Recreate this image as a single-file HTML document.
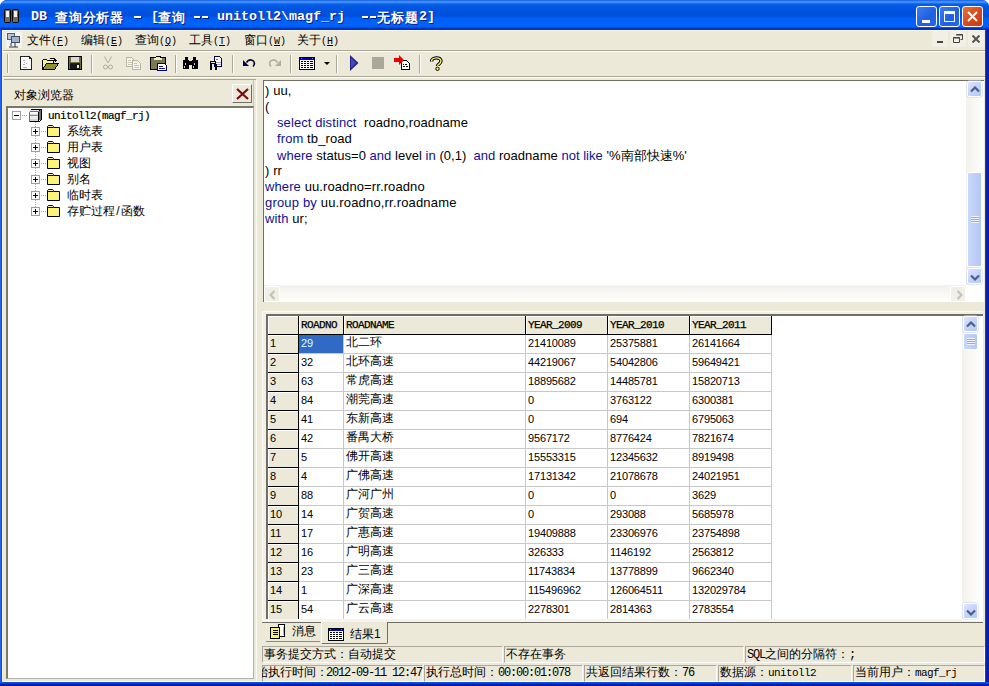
<!DOCTYPE html>
<html><head><meta charset="utf-8">
<style>
*{box-sizing:border-box;margin:0;padding:0}
html,body{width:989px;height:686px;overflow:hidden;background:#fff}
body{position:relative;font-family:"Liberation Sans",sans-serif;font-size:12px;color:#000}
.a{position:absolute}
.mono{font-family:"Liberation Mono",monospace}
#win{left:0;top:0;width:989px;height:686px;background:#0831d9;border-radius:7px 7px 0 0;overflow:hidden}
#title{left:0;top:0;width:989px;height:30px;background:linear-gradient(180deg,#0a4fd0 0px,#3a8cff 1px,#3a8cff 2.5px,#0860e6 4px,#0055e2 7px,#0050dc 16px,#005ef6 18px,#0064fc 26px,#0052e4 27.5px,#0032c4 28.5px,#0030c0 30px)}
#face{left:2px;top:30px;width:983px;height:652px;background:#ece9d8;border-left:1px solid #f4f2ea;border-bottom:1px solid #fbfaf4}
.tb{top:6px;width:21px;height:21px;border:1px solid #fff;border-radius:3px;background:linear-gradient(135deg,#3b7cf5,#1f5fe0 60%,#2a66e8)}
.ttl{left:31px;top:9px;color:#fff;font-family:"Liberation Mono",monospace;font-weight:bold;font-size:13.33px;white-space:pre;text-shadow:1px 1px 0 #0a1e8a}
.menu{top:32px;font-size:12px;white-space:pre}
.sep{top:55px;width:2px;height:18px;border-left:1px solid #aca899;border-right:1px solid #fff}
.ed{font-size:13px;white-space:pre;left:265px;letter-spacing:0.1px}
.kw{color:#101095}
.hc{background:#ece9d8;border-right:1px solid #000;border-bottom:1px solid #000;box-shadow:inset 1px 1px 0 #fff}
.gc{background:#fff;border-right:1px solid #c8c8c8;border-bottom:1px solid #c8c8c8}
.sel{background:#316ac5}
.htx{font-family:"Liberation Mono",monospace;font-size:11px;letter-spacing:-0.6px;white-space:pre;-webkit-text-stroke:0.25px #000}
.gt{font-size:11px;white-space:pre;line-height:13px;letter-spacing:-0.15px}
.cj{font-size:12px;letter-spacing:0}
.selt{color:#dff}
.tree{font-size:12px;white-space:pre;line-height:16px}
.tree.mono{font-size:11px;letter-spacing:-0.6px;-webkit-text-stroke:0.2px #000}
.trk{background:linear-gradient(90deg,#f3f1ec,#fefefb)}
.trkh{background:linear-gradient(180deg,#f3f1ec,#fefefb)}
.sbtn{border:1px solid #fff;border-radius:2px;background:linear-gradient(135deg,#dce6fe,#c4d4fb 50%,#b6c9f6);box-shadow:0 0 0 0.5px #c8d4ee}
.sthumb{border:1px solid #fff;border-radius:2px;background:linear-gradient(90deg,#c8d7fb,#bccdf9 60%,#b4c8f5)}
.grip{width:8px;height:7px;background:repeating-linear-gradient(180deg,#eef3fe 0 1px,#8cacf0 1px 2px)}
.sbtnd{border:1px solid #fff;border-radius:2px;background:#f0efe8}
.tab{font-size:12px;white-space:pre;line-height:14px}
.stp{border:1px solid;border-color:#aca899 #fff #fff #aca899}
.stx{font-size:12px;white-space:pre;line-height:15px}
.m{font-family:"Liberation Mono",monospace;font-size:12px;letter-spacing:-1.2px}
.tc{letter-spacing:0.8px}
.mm{font-family:"Liberation Mono",monospace;font-size:10px;letter-spacing:0}
.mdi{background:#f1efe6;border-radius:2px}
.ml{font-size:11px;letter-spacing:-0.6px}

</style></head><body>
<div id="win" class="a"></div>
<div id="title" class="a" style="border-radius:7px 7px 0 0"></div>
<div class="a" style="left:0;top:30px;width:1px;height:656px;background:#1f63f5"></div>
<div class="a" style="left:1px;top:30px;width:1px;height:656px;background:#164fcf"></div>
<div class="a" style="left:985px;top:30px;width:1px;height:656px;background:#1a3ad0"></div>
<div class="a" style="left:986px;top:30px;width:3px;height:656px;background:#0a1fa8"></div>
<div class="a" style="left:0;top:682px;width:989px;height:4px;background:linear-gradient(180deg,#0c55e8 0 1px,#0838d8 1px 2px,#0424b0 2px 3px,#001c98 3px)"></div>
<div id="face" class="a"></div>
<div class="a" style="left:3px;top:30px;width:982px;height:1px;background:#f8f8f4"></div>

<!-- title icon -->
<svg class="a" style="left:4px;top:9px" width="16" height="14" viewBox="0 0 16 14">
<rect x="0.5" y="0.5" width="6" height="13" rx="1" fill="#6a6a60" stroke="#000"/>
<rect x="8.5" y="0.5" width="6" height="13" rx="1" fill="#6a6a60" stroke="#000"/>
<rect x="2" y="2" width="3" height="6" fill="#f0f0f0"/><rect x="10" y="2" width="3" height="6" fill="#f0f0f0"/>
</svg>
<div class="a ttl" style="left:31px">DB</div>
<div class="a ttl tc" style="left:55px">查询分析器</div>
<div class="a" style="left:134px;top:16px;width:7px;height:2px;background:#fff;box-shadow:1px 1px 0 #0a1e8a"></div>
<div class="a ttl" style="left:151px">[</div>
<div class="a ttl tc" style="left:158px">查询</div>
<div class="a" style="left:194px;top:16px;width:6px;height:2px;background:#fff;box-shadow:1px 1px 0 #0a1e8a"></div><div class="a" style="left:202px;top:16px;width:6px;height:2px;background:#fff;box-shadow:1px 1px 0 #0a1e8a"></div>
<div class="a ttl" style="left:217px">unitoll2\magf_rj</div>
<div class="a" style="left:362px;top:16px;width:6px;height:2px;background:#fff;box-shadow:1px 1px 0 #0a1e8a"></div><div class="a" style="left:370px;top:16px;width:6px;height:2px;background:#fff;box-shadow:1px 1px 0 #0a1e8a"></div>
<div class="a ttl tc" style="left:377px">无标题</div>
<div class="a ttl" style="left:419px">2]</div>

<!-- title buttons -->
<div class="a tb" style="left:916px"><div class="a" style="left:5px;top:13px;width:8px;height:3px;background:#fff"></div></div>
<div class="a tb" style="left:939px"><div class="a" style="left:4px;top:4px;width:11px;height:11px;border:1px solid #fff;border-top-width:3px"></div></div>
<div class="a tb" style="left:962px;background:linear-gradient(135deg,#e6703e,#d4451c 60%,#c83a16)">
<svg class="a" style="left:4px;top:4px" width="11" height="11"><path d="M1 1L10 10M10 1L1 10" stroke="#fff" stroke-width="2"/></svg></div>

<!-- menu bar -->
<svg class="a" style="left:6px;top:32px" width="16" height="16" viewBox="0 0 16 16">
<rect x="0" y="0" width="16" height="16" fill="#f4f4f4"/>
<rect x="1.5" y="1.5" width="7" height="6" fill="#b6c3d6" stroke="#506070"/>
<rect x="5.5" y="4.5" width="8" height="6" fill="#9fb4cc" stroke="#405060"/>
<path d="M5 11v3M9 11v4M3 15h9" stroke="#333" stroke-width="1"/>
</svg>
<div class="a menu" style="left:27px">文件<span class="mm">(<u>F</u>)</span></div>
<div class="a menu" style="left:81px">编辑<span class="mm">(<u>E</u>)</span></div>
<div class="a menu" style="left:135px">查询<span class="mm">(<u>Q</u>)</span></div>
<div class="a menu" style="left:189px">工具<span class="mm">(<u>T</u>)</span></div>
<div class="a menu" style="left:244px">窗口<span class="mm">(<u>W</u>)</span></div>
<div class="a menu" style="left:297px">关于<span class="mm">(<u>H</u>)</span></div>
<!-- mdi buttons -->
<div class="a mdi" style="left:932px;top:31px;width:16px;height:16px"><div class="a" style="left:5px;top:10px;width:6px;height:2px;background:#444"></div></div>
<div class="a mdi" style="left:950px;top:31px;width:16px;height:16px">
<svg class="a" style="left:3px;top:3px" width="10" height="9"><path d="M3.5 0.5h6v5h-2M0.5 3.5h6v5h-6z" fill="none" stroke="#444"/><path d="M3 1h7M0 4h7" stroke="#444"/></svg></div>
<div class="a mdi" style="left:968px;top:31px;width:16px;height:16px">
<svg class="a" style="left:4px;top:4px" width="8" height="8"><path d="M0.5 0.5L7.5 7.5M7.5 0.5L0.5 7.5" stroke="#555" stroke-width="2"/></svg></div>
<div class="a" style="left:3px;top:50px;width:982px;height:1px;background:#aca899"></div>
<div class="a" style="left:3px;top:51px;width:982px;height:1px;background:#fff"></div>

<!-- toolbar -->
<div class="a" style="left:7px;top:54px;width:2px;height:19px;border-left:1px solid #aca899;border-right:1px solid #fff"></div>
<div class="a" style="left:3px;top:76px;width:982px;height:1px;background:#aca899"></div>
<div class="a" style="left:3px;top:77px;width:982px;height:1px;background:#fff"></div>
<div class="a sep" style="left:91px"></div>
<div class="a sep" style="left:175px"></div>
<div class="a sep" style="left:232px"></div>
<div class="a sep" style="left:290px"></div>
<div class="a sep" style="left:336px"></div>
<div class="a sep" style="left:419px"></div>


<svg class="a" style="left:0;top:50px" width="460" height="26" viewBox="0 50 460 26" shape-rendering="crispEdges">
<!-- new -->
<path d="M20.5 56.5H29.5L31.5 58.5V69.5H20.5Z" fill="#fff" stroke="#222"/>
<path d="M28 57H30V59H28Z" fill="#fff"/><path d="M29.5 56.5V58.5H31.5" fill="none" stroke="#222"/>
<path d="M23 60h2M24 62h1M23 64h2M26 63h1M23 67h4" stroke="#aaa"/>
<!-- open -->
<path d="M50 58.5h4l1 1v1" fill="none" stroke="#000"/><path d="M54 60h3l-1.5 2z" fill="#000"/>
<path d="M42.5 69.5V60.5L43.5 59.5H46.5L47.5 60.5H53.5V63.5" fill="#f8f88c" stroke="#000"/>
<path d="M42.5 69.5L46.5 63.5H58.5L54.5 69.5Z" fill="#909030" stroke="#000"/>
<!-- save -->
<path d="M68.5 56.5H81.5V69.5H68.5Z" fill="#707038" stroke="#000"/>
<path d="M71 57H79V62H71Z" fill="#d8d8d8"/><path d="M70 63H80" stroke="#222"/>
<path d="M70 64H80V69H70Z" fill="#181818"/><path d="M77 65H79V68H77Z" fill="#e8e8e8"/>
<!-- cut disabled -->
<path d="M104.5 56.5L108 63M111.5 56.5L108 63" stroke="#b0ae9c" fill="none" shape-rendering="auto"/>
<circle cx="105.5" cy="67" r="2" fill="none" stroke="#b0ae9c" shape-rendering="auto"/><circle cx="110.5" cy="67" r="2" fill="none" stroke="#b0ae9c" shape-rendering="auto"/>
<!-- copy disabled -->
<path d="M126.5 57.5H131.5L133.5 59.5V66.5H126.5Z" fill="#f4f3ec" stroke="#b8b6a4"/>
<path d="M132.5 60.5H137.5L140.5 63.5V69.5H132.5Z" fill="#f4f3ec" stroke="#b8b6a4"/>
<path d="M128 60h3M128 62h4M128 64h4M134 63h3M134 65h5M134 67h5" stroke="#c8c6b4"/>
<!-- paste -->
<path d="M150.5 57.5H165.5V69.5H150.5Z" fill="#7a7a50" stroke="#000"/>
<path d="M154 58H162V60H154Z" fill="#f0eeb8"/><path d="M156 56H160V58H156Z" fill="#f0eeb8"/><path d="M155.5 56.5h5" stroke="#000"/>
<path d="M157.5 63.5H164.5L166.5 65.5V70.5H157.5Z" fill="#fff" stroke="#000060"/>
<path d="M159 66h4M159 68h6" stroke="#1818a0"/>
<!-- binoculars -->
<path d="M185 57h3v3h-3zM193 57h3v3h-3z" fill="#000"/>
<path d="M183 60h6v9h-6zM192 60h6v9h-6zM188 61h5v4h-5z" fill="#000"/>
<path d="M185 63h1v2h-1zM194 63h1v2h-1zM184 66h1v2h-1zM193 66h1v2h-1z" fill="#ccc"/>
<!-- other -->
<path d="M214.5 56.5H219.5L221.5 58.5V66.5H214.5Z" fill="#fff" stroke="#000050"/>
<path d="M216 59h2" stroke="#6060c0"/><path d="M215 62h6M215 64h6" stroke="#a0a0d0"/>
<path d="M210 61h6v3h-6zM210 64h2v6h-2zM215 64h2v6h-2z" fill="#000"/><path d="M211 62h4v1h-4z" fill="#e8e8c8"/>
<!-- undo -->
<path d="M246.5 62.5C248 60 250 59.5 252 60.2C255 61.3 255 64.5 253 66.5" fill="none" stroke="#000030" stroke-width="1.6" shape-rendering="auto"/>
<path d="M243 60L243 66L249 66Z" fill="#000050" shape-rendering="auto"/>
<!-- redo disabled -->
<path d="M277.5 62.5C276 60 274 59.5 272 60.2C269 61.3 269 64.5 271 66.5" fill="none" stroke="#b0ae9c" stroke-width="1.6" shape-rendering="auto"/>
<path d="M281 60L281 66L275 66Z" fill="#b0ae9c" shape-rendering="auto"/>

<!-- tbgrid -->
<path d="M299.5 57.5H314.5V69.5H299.5Z" fill="#fff" stroke="#000"/>
<path d="M300 58H314V60H300Z" fill="#0000c8"/><path d="M301 58.5h1M312 58.5h1" stroke="#8080ff"/>
<path d="M301 61.5h2M304 61.5h2M307 61.5h2M310 61.5h3M301 63.5h2M304 63.5h2M307 63.5h2M310 63.5h3M301 65.5h2M304 65.5h2M307 65.5h2M310 65.5h3M301 67.5h2M304 67.5h2M307 67.5h2M310 67.5h3" stroke="#000"/>
<path d="M324 62h6l-3 3z" fill="#000" shape-rendering="auto"/>
<!-- run -->
<path d="M350 55L358.5 63L350 71Z" fill="#242490" shape-rendering="auto"/>
<path d="M351 58L356 63L351 68Z" fill="#4848b8" shape-rendering="auto"/>
<!-- stop -->
<path d="M372 57H384V69H372Z" fill="#a9a799"/>
<!-- red arrow doc -->
<path d="M401.5 60.5H406.5L409.5 63.5V69.5H401.5Z" fill="#fff" stroke="#000"/>
<path d="M403 64.5h1M405 64.5h2M403 66.5h2M406 66.5h2" stroke="#000"/>
<path d="M394 58H399V55L404 60L399 65V62H394Z" fill="#ee0000" shape-rendering="auto"/>
<!-- help -->
<path d="M431.5 61.5C431.5 57 441 56.5 441 61C441 64 437.5 64 437.5 66" fill="none" stroke="#000" stroke-width="3.4" shape-rendering="auto"/>
<path d="M431.5 61.5C431.5 57 441 56.5 441 61C441 64 437.5 64 437.5 66" fill="none" stroke="#f8f070" stroke-width="1.4" shape-rendering="auto"/>
<circle cx="437.5" cy="68.8" r="1.7" fill="#f8f070" stroke="#000" stroke-width="1" shape-rendering="auto"/>
</svg>

<!-- left panel -->
<div class="a" style="left:4px;top:79px;width:252px;height:1px;background:#aca899"></div>
<div class="a" style="left:253px;top:80px;width:1px;height:26px;background:#c8c5b5"></div>
<div class="a" style="left:14px;top:87px;font-size:12px">对象浏览器</div>
<div class="a" style="left:232px;top:84px;width:20px;height:19px;background:#ece9d8;border:1px solid;border-color:#fff #716f64 #716f64 #fff">
<svg class="a" style="left:3px;top:3px" width="13" height="12"><path d="M1 1L12 11M12 1L1 11" stroke="#7a0a0a" stroke-width="2.2"/></svg></div>
<div class="a" style="left:6px;top:106px;width:248px;height:573px;background:#fff;border:2px solid #7a7a68;border-right:1px solid #b4b2a4;border-bottom:1px solid #b4b2a4"></div>


<!-- tree -->
<div class="a" style="left:12px;top:111px;width:9px;height:9px;border:1px solid #a0a0a0;background:#fff"></div>
<div class="a" style="left:14px;top:115px;width:5px;height:1px;background:#000"></div>
<div class="a" style="left:22px;top:115px;width:6px;height:1px;background:repeating-linear-gradient(90deg,#a0a0a0 0 1px,transparent 1px 2px)"></div>
<div class="a" style="left:35px;top:122px;width:1px;height:89px;background:repeating-linear-gradient(180deg,#a0a0a0 0 1px,transparent 1px 2px)"></div>
<svg class="a" style="left:29px;top:109px" width="13" height="13" viewBox="0 0 13 13" shape-rendering="crispEdges">
<path d="M0 2H10V13H0Z" fill="#d4d4d4"/>
<path d="M1 0H12V2H1Z" fill="#e8e8e8"/>
<path d="M10 1H12V11H10Z" fill="#707070"/>
<path d="M1 3H9V5H1Z" fill="#f8f8f8"/><path d="M0 6H10V7H0Z" fill="#909090"/><path d="M1 7H9V10H1Z" fill="#ececec"/>
<path d="M0.5 2.5V12.5H9.5V2.5H0.5" fill="none" stroke="#707070"/>
<path d="M2 0.5H12.5V10.5L10.5 12.5H0.5" fill="none" stroke="#000"/>
<path d="M9.5 2.5L11.5 0.5M9.5 2.5V12.5" fill="none" stroke="#000"/>
</svg>
<div class="a tree mono" style="left:48px;top:108px">unitoll2(magf_rj)</div>
<div class="a" style="left:31px;top:127px;width:9px;height:9px;border:1px solid #a0a0a0;background:#fff"></div>
<div class="a" style="left:33px;top:131px;width:5px;height:1px;background:#000"></div><div class="a" style="left:35px;top:129px;width:1px;height:5px;background:#000"></div>
<div class="a" style="left:41px;top:131px;width:5px;height:1px;background:repeating-linear-gradient(90deg,#a0a0a0 0 1px,transparent 1px 2px)"></div>
<svg class="a" style="left:47px;top:125px" width="13" height="12" viewBox="0 0 13 12"><path d="M0.5 11.5V1.5L1.5 0.5H5.5L6.5 1.5V2.5H12.5V11.5Z" fill="#fcf47a" stroke="#000"/><path d="M1 2.5H6" stroke="#000"/></svg>
<div class="a tree" style="left:67px;top:123px">系统表</div>
<div class="a" style="left:31px;top:143px;width:9px;height:9px;border:1px solid #a0a0a0;background:#fff"></div>
<div class="a" style="left:33px;top:147px;width:5px;height:1px;background:#000"></div><div class="a" style="left:35px;top:145px;width:1px;height:5px;background:#000"></div>
<div class="a" style="left:41px;top:147px;width:5px;height:1px;background:repeating-linear-gradient(90deg,#a0a0a0 0 1px,transparent 1px 2px)"></div>
<svg class="a" style="left:47px;top:141px" width="13" height="12" viewBox="0 0 13 12"><path d="M0.5 11.5V1.5L1.5 0.5H5.5L6.5 1.5V2.5H12.5V11.5Z" fill="#fcf47a" stroke="#000"/><path d="M1 2.5H6" stroke="#000"/></svg>
<div class="a tree" style="left:67px;top:139px">用户表</div>
<div class="a" style="left:31px;top:159px;width:9px;height:9px;border:1px solid #a0a0a0;background:#fff"></div>
<div class="a" style="left:33px;top:163px;width:5px;height:1px;background:#000"></div><div class="a" style="left:35px;top:161px;width:1px;height:5px;background:#000"></div>
<div class="a" style="left:41px;top:163px;width:5px;height:1px;background:repeating-linear-gradient(90deg,#a0a0a0 0 1px,transparent 1px 2px)"></div>
<svg class="a" style="left:47px;top:157px" width="13" height="12" viewBox="0 0 13 12"><path d="M0.5 11.5V1.5L1.5 0.5H5.5L6.5 1.5V2.5H12.5V11.5Z" fill="#fcf47a" stroke="#000"/><path d="M1 2.5H6" stroke="#000"/></svg>
<div class="a tree" style="left:67px;top:155px">视图</div>
<div class="a" style="left:31px;top:175px;width:9px;height:9px;border:1px solid #a0a0a0;background:#fff"></div>
<div class="a" style="left:33px;top:179px;width:5px;height:1px;background:#000"></div><div class="a" style="left:35px;top:177px;width:1px;height:5px;background:#000"></div>
<div class="a" style="left:41px;top:179px;width:5px;height:1px;background:repeating-linear-gradient(90deg,#a0a0a0 0 1px,transparent 1px 2px)"></div>
<svg class="a" style="left:47px;top:173px" width="13" height="12" viewBox="0 0 13 12"><path d="M0.5 11.5V1.5L1.5 0.5H5.5L6.5 1.5V2.5H12.5V11.5Z" fill="#fcf47a" stroke="#000"/><path d="M1 2.5H6" stroke="#000"/></svg>
<div class="a tree" style="left:67px;top:171px">别名</div>
<div class="a" style="left:31px;top:191px;width:9px;height:9px;border:1px solid #a0a0a0;background:#fff"></div>
<div class="a" style="left:33px;top:195px;width:5px;height:1px;background:#000"></div><div class="a" style="left:35px;top:193px;width:1px;height:5px;background:#000"></div>
<div class="a" style="left:41px;top:195px;width:5px;height:1px;background:repeating-linear-gradient(90deg,#a0a0a0 0 1px,transparent 1px 2px)"></div>
<svg class="a" style="left:47px;top:189px" width="13" height="12" viewBox="0 0 13 12"><path d="M0.5 11.5V1.5L1.5 0.5H5.5L6.5 1.5V2.5H12.5V11.5Z" fill="#fcf47a" stroke="#000"/><path d="M1 2.5H6" stroke="#000"/></svg>
<div class="a tree" style="left:67px;top:187px">临时表</div>
<div class="a" style="left:31px;top:207px;width:9px;height:9px;border:1px solid #a0a0a0;background:#fff"></div>
<div class="a" style="left:33px;top:211px;width:5px;height:1px;background:#000"></div><div class="a" style="left:35px;top:209px;width:1px;height:5px;background:#000"></div>
<div class="a" style="left:41px;top:211px;width:5px;height:1px;background:repeating-linear-gradient(90deg,#a0a0a0 0 1px,transparent 1px 2px)"></div>
<svg class="a" style="left:47px;top:205px" width="13" height="12" viewBox="0 0 13 12"><path d="M0.5 11.5V1.5L1.5 0.5H5.5L6.5 1.5V2.5H12.5V11.5Z" fill="#fcf47a" stroke="#000"/><path d="M1 2.5H6" stroke="#000"/></svg>
<div class="a tree" style="left:67px;top:203px">存贮过程<span style="display:inline-block;width:6px;text-align:center">/</span>函数</div>

<div class="a" style="left:256px;top:80px;width:1px;height:601px;background:#faf9f2"></div>
<!-- editor -->
<div class="a" style="left:263px;top:80px;width:721px;height:222px;background:#fff;border-left:1px solid #716f64;border-top:1px solid #716f64"></div>
<div class="a ed" style="top:83px">) uu,</div>
<div class="a ed" style="top:99px">(</div>
<div class="a ed" style="top:115px;left:277px"><span class="kw">select distinct</span>  roadno,roadname</div>
<div class="a ed" style="top:131px;left:277px"><span class="kw">from</span> tb_road</div>
<div class="a ed" style="top:147px;left:277px;letter-spacing:0.03px"><span class="kw">where</span> status=0 <span class="kw">and</span> level <span class="kw">in</span> (0,1)  <span class="kw">and</span> roadname <span class="kw">not like</span> '%南部快速%'</div>
<div class="a ed" style="top:163px">) rr</div>
<div class="a ed" style="top:179px"><span class="kw">where</span> uu.roadno=rr.roadno</div>
<div class="a ed" style="top:195px;letter-spacing:0.17px"><span class="kw">group by</span> uu.roadno,rr.roadname</div>
<div class="a ed" style="top:211px"><span class="kw">with</span> ur;</div>


<!-- editor scrollbars -->
<div class="a trk" style="left:966px;top:81px;width:17px;height:204px"></div>
<div class="a sbtn" style="left:967px;top:81px;width:15px;height:16px"><svg class="a" style="left:2px;top:4px" width="10" height="7"><path d="M1 5.5L5 1.5L9 5.5" fill="none" stroke="#4d6185" stroke-width="2.2"/></svg></div>
<div class="a sthumb" style="left:967px;top:172px;width:15px;height:95px"><div class="a grip" style="left:3px;top:43px"></div></div>
<div class="a sbtn" style="left:967px;top:268px;width:15px;height:16px"><svg class="a" style="left:2px;top:5px" width="10" height="7"><path d="M1 1.5L5 5.5L9 1.5" fill="none" stroke="#4d6185" stroke-width="2.2"/></svg></div>
<div class="a trkh" style="left:264px;top:285px;width:702px;height:17px"></div>
<div class="a sbtnd" style="left:264px;top:286px;width:16px;height:16px"><svg class="a" style="left:4px;top:3px" width="7" height="10"><path d="M5.5 1L1.5 5L5.5 9" fill="none" stroke="#c3c1b4" stroke-width="2"/></svg></div>
<div class="a sbtnd" style="left:950px;top:286px;width:16px;height:16px"><svg class="a" style="left:5px;top:3px" width="7" height="10"><path d="M1.5 1L5.5 5L1.5 9" fill="none" stroke="#c3c1b4" stroke-width="2"/></svg></div>

<!-- grid -->
<div class="a" style="left:262px;top:311px;width:721px;height:311px;background:#f2f0e6;border-left:1px solid #faf9f3;border-top:1px solid #faf9f3"></div>
<div class="a" style="left:266px;top:314px;width:717px;height:307px;background:#fff;border-left:2px solid #716f64;border-top:2px solid #716f64"></div>
<div class="a hc" style="left:268px;top:316px;width:31px;height:19px"></div>
<div class="a hc" style="left:299px;top:316px;width:45px;height:19px"></div>
<div class="a htx" style="left:301px;top:319px">ROADNO</div>
<div class="a hc" style="left:344px;top:316px;width:182px;height:19px"></div>
<div class="a htx" style="left:346px;top:319px">ROADNAME</div>
<div class="a hc" style="left:526px;top:316px;width:82px;height:19px"></div>
<div class="a htx" style="left:528px;top:319px">YEAR_2009</div>
<div class="a hc" style="left:608px;top:316px;width:82px;height:19px"></div>
<div class="a htx" style="left:610px;top:319px">YEAR_2010</div>
<div class="a hc" style="left:690px;top:316px;width:82px;height:19px"></div>
<div class="a htx" style="left:692px;top:319px">YEAR_2011</div>
<div class="a hc" style="left:268px;top:335px;width:31px;height:19px"></div>
<div class="a gt" style="left:270px;top:337px">1</div>
<div class="a gc sel" style="left:299px;top:335px;width:45px;height:19px"></div>
<div class="a gt selt" style="left:301px;top:337px">29</div>
<div class="a gc" style="left:344px;top:335px;width:182px;height:19px"></div>
<div class="a gt cj" style="left:346px;top:336px">北二环</div>
<div class="a gc" style="left:526px;top:335px;width:82px;height:19px"></div>
<div class="a gt" style="left:528px;top:337px">21410089</div>
<div class="a gc" style="left:608px;top:335px;width:82px;height:19px"></div>
<div class="a gt" style="left:610px;top:337px">25375881</div>
<div class="a gc" style="left:690px;top:335px;width:82px;height:19px"></div>
<div class="a gt" style="left:692px;top:337px">26141664</div>
<div class="a hc" style="left:268px;top:354px;width:31px;height:19px"></div>
<div class="a gt" style="left:270px;top:356px">2</div>
<div class="a gc" style="left:299px;top:354px;width:45px;height:19px"></div>
<div class="a gt" style="left:301px;top:356px">32</div>
<div class="a gc" style="left:344px;top:354px;width:182px;height:19px"></div>
<div class="a gt cj" style="left:346px;top:355px">北环高速</div>
<div class="a gc" style="left:526px;top:354px;width:82px;height:19px"></div>
<div class="a gt" style="left:528px;top:356px">44219067</div>
<div class="a gc" style="left:608px;top:354px;width:82px;height:19px"></div>
<div class="a gt" style="left:610px;top:356px">54042806</div>
<div class="a gc" style="left:690px;top:354px;width:82px;height:19px"></div>
<div class="a gt" style="left:692px;top:356px">59649421</div>
<div class="a hc" style="left:268px;top:373px;width:31px;height:19px"></div>
<div class="a gt" style="left:270px;top:375px">3</div>
<div class="a gc" style="left:299px;top:373px;width:45px;height:19px"></div>
<div class="a gt" style="left:301px;top:375px">63</div>
<div class="a gc" style="left:344px;top:373px;width:182px;height:19px"></div>
<div class="a gt cj" style="left:346px;top:374px">常虎高速</div>
<div class="a gc" style="left:526px;top:373px;width:82px;height:19px"></div>
<div class="a gt" style="left:528px;top:375px">18895682</div>
<div class="a gc" style="left:608px;top:373px;width:82px;height:19px"></div>
<div class="a gt" style="left:610px;top:375px">14485781</div>
<div class="a gc" style="left:690px;top:373px;width:82px;height:19px"></div>
<div class="a gt" style="left:692px;top:375px">15820713</div>
<div class="a hc" style="left:268px;top:392px;width:31px;height:19px"></div>
<div class="a gt" style="left:270px;top:394px">4</div>
<div class="a gc" style="left:299px;top:392px;width:45px;height:19px"></div>
<div class="a gt" style="left:301px;top:394px">84</div>
<div class="a gc" style="left:344px;top:392px;width:182px;height:19px"></div>
<div class="a gt cj" style="left:346px;top:393px">潮莞高速</div>
<div class="a gc" style="left:526px;top:392px;width:82px;height:19px"></div>
<div class="a gt" style="left:528px;top:394px">0</div>
<div class="a gc" style="left:608px;top:392px;width:82px;height:19px"></div>
<div class="a gt" style="left:610px;top:394px">3763122</div>
<div class="a gc" style="left:690px;top:392px;width:82px;height:19px"></div>
<div class="a gt" style="left:692px;top:394px">6300381</div>
<div class="a hc" style="left:268px;top:411px;width:31px;height:19px"></div>
<div class="a gt" style="left:270px;top:413px">5</div>
<div class="a gc" style="left:299px;top:411px;width:45px;height:19px"></div>
<div class="a gt" style="left:301px;top:413px">41</div>
<div class="a gc" style="left:344px;top:411px;width:182px;height:19px"></div>
<div class="a gt cj" style="left:346px;top:412px">东新高速</div>
<div class="a gc" style="left:526px;top:411px;width:82px;height:19px"></div>
<div class="a gt" style="left:528px;top:413px">0</div>
<div class="a gc" style="left:608px;top:411px;width:82px;height:19px"></div>
<div class="a gt" style="left:610px;top:413px">694</div>
<div class="a gc" style="left:690px;top:411px;width:82px;height:19px"></div>
<div class="a gt" style="left:692px;top:413px">6795063</div>
<div class="a hc" style="left:268px;top:430px;width:31px;height:19px"></div>
<div class="a gt" style="left:270px;top:432px">6</div>
<div class="a gc" style="left:299px;top:430px;width:45px;height:19px"></div>
<div class="a gt" style="left:301px;top:432px">42</div>
<div class="a gc" style="left:344px;top:430px;width:182px;height:19px"></div>
<div class="a gt cj" style="left:346px;top:431px">番禺大桥</div>
<div class="a gc" style="left:526px;top:430px;width:82px;height:19px"></div>
<div class="a gt" style="left:528px;top:432px">9567172</div>
<div class="a gc" style="left:608px;top:430px;width:82px;height:19px"></div>
<div class="a gt" style="left:610px;top:432px">8776424</div>
<div class="a gc" style="left:690px;top:430px;width:82px;height:19px"></div>
<div class="a gt" style="left:692px;top:432px">7821674</div>
<div class="a hc" style="left:268px;top:449px;width:31px;height:19px"></div>
<div class="a gt" style="left:270px;top:451px">7</div>
<div class="a gc" style="left:299px;top:449px;width:45px;height:19px"></div>
<div class="a gt" style="left:301px;top:451px">5</div>
<div class="a gc" style="left:344px;top:449px;width:182px;height:19px"></div>
<div class="a gt cj" style="left:346px;top:450px">佛开高速</div>
<div class="a gc" style="left:526px;top:449px;width:82px;height:19px"></div>
<div class="a gt" style="left:528px;top:451px">15553315</div>
<div class="a gc" style="left:608px;top:449px;width:82px;height:19px"></div>
<div class="a gt" style="left:610px;top:451px">12345632</div>
<div class="a gc" style="left:690px;top:449px;width:82px;height:19px"></div>
<div class="a gt" style="left:692px;top:451px">8919498</div>
<div class="a hc" style="left:268px;top:468px;width:31px;height:19px"></div>
<div class="a gt" style="left:270px;top:470px">8</div>
<div class="a gc" style="left:299px;top:468px;width:45px;height:19px"></div>
<div class="a gt" style="left:301px;top:470px">4</div>
<div class="a gc" style="left:344px;top:468px;width:182px;height:19px"></div>
<div class="a gt cj" style="left:346px;top:469px">广佛高速</div>
<div class="a gc" style="left:526px;top:468px;width:82px;height:19px"></div>
<div class="a gt" style="left:528px;top:470px">17131342</div>
<div class="a gc" style="left:608px;top:468px;width:82px;height:19px"></div>
<div class="a gt" style="left:610px;top:470px">21078678</div>
<div class="a gc" style="left:690px;top:468px;width:82px;height:19px"></div>
<div class="a gt" style="left:692px;top:470px">24021951</div>
<div class="a hc" style="left:268px;top:487px;width:31px;height:19px"></div>
<div class="a gt" style="left:270px;top:489px">9</div>
<div class="a gc" style="left:299px;top:487px;width:45px;height:19px"></div>
<div class="a gt" style="left:301px;top:489px">88</div>
<div class="a gc" style="left:344px;top:487px;width:182px;height:19px"></div>
<div class="a gt cj" style="left:346px;top:488px">广河广州</div>
<div class="a gc" style="left:526px;top:487px;width:82px;height:19px"></div>
<div class="a gt" style="left:528px;top:489px">0</div>
<div class="a gc" style="left:608px;top:487px;width:82px;height:19px"></div>
<div class="a gt" style="left:610px;top:489px">0</div>
<div class="a gc" style="left:690px;top:487px;width:82px;height:19px"></div>
<div class="a gt" style="left:692px;top:489px">3629</div>
<div class="a hc" style="left:268px;top:506px;width:31px;height:19px"></div>
<div class="a gt" style="left:270px;top:508px">10</div>
<div class="a gc" style="left:299px;top:506px;width:45px;height:19px"></div>
<div class="a gt" style="left:301px;top:508px">14</div>
<div class="a gc" style="left:344px;top:506px;width:182px;height:19px"></div>
<div class="a gt cj" style="left:346px;top:507px">广贺高速</div>
<div class="a gc" style="left:526px;top:506px;width:82px;height:19px"></div>
<div class="a gt" style="left:528px;top:508px">0</div>
<div class="a gc" style="left:608px;top:506px;width:82px;height:19px"></div>
<div class="a gt" style="left:610px;top:508px">293088</div>
<div class="a gc" style="left:690px;top:506px;width:82px;height:19px"></div>
<div class="a gt" style="left:692px;top:508px">5685978</div>
<div class="a hc" style="left:268px;top:525px;width:31px;height:19px"></div>
<div class="a gt" style="left:270px;top:527px">11</div>
<div class="a gc" style="left:299px;top:525px;width:45px;height:19px"></div>
<div class="a gt" style="left:301px;top:527px">17</div>
<div class="a gc" style="left:344px;top:525px;width:182px;height:19px"></div>
<div class="a gt cj" style="left:346px;top:526px">广惠高速</div>
<div class="a gc" style="left:526px;top:525px;width:82px;height:19px"></div>
<div class="a gt" style="left:528px;top:527px">19409888</div>
<div class="a gc" style="left:608px;top:525px;width:82px;height:19px"></div>
<div class="a gt" style="left:610px;top:527px">23306976</div>
<div class="a gc" style="left:690px;top:525px;width:82px;height:19px"></div>
<div class="a gt" style="left:692px;top:527px">23754898</div>
<div class="a hc" style="left:268px;top:544px;width:31px;height:19px"></div>
<div class="a gt" style="left:270px;top:546px">12</div>
<div class="a gc" style="left:299px;top:544px;width:45px;height:19px"></div>
<div class="a gt" style="left:301px;top:546px">16</div>
<div class="a gc" style="left:344px;top:544px;width:182px;height:19px"></div>
<div class="a gt cj" style="left:346px;top:545px">广明高速</div>
<div class="a gc" style="left:526px;top:544px;width:82px;height:19px"></div>
<div class="a gt" style="left:528px;top:546px">326333</div>
<div class="a gc" style="left:608px;top:544px;width:82px;height:19px"></div>
<div class="a gt" style="left:610px;top:546px">1146192</div>
<div class="a gc" style="left:690px;top:544px;width:82px;height:19px"></div>
<div class="a gt" style="left:692px;top:546px">2563812</div>
<div class="a hc" style="left:268px;top:563px;width:31px;height:19px"></div>
<div class="a gt" style="left:270px;top:565px">13</div>
<div class="a gc" style="left:299px;top:563px;width:45px;height:19px"></div>
<div class="a gt" style="left:301px;top:565px">23</div>
<div class="a gc" style="left:344px;top:563px;width:182px;height:19px"></div>
<div class="a gt cj" style="left:346px;top:564px">广三高速</div>
<div class="a gc" style="left:526px;top:563px;width:82px;height:19px"></div>
<div class="a gt" style="left:528px;top:565px">11743834</div>
<div class="a gc" style="left:608px;top:563px;width:82px;height:19px"></div>
<div class="a gt" style="left:610px;top:565px">13778899</div>
<div class="a gc" style="left:690px;top:563px;width:82px;height:19px"></div>
<div class="a gt" style="left:692px;top:565px">9662340</div>
<div class="a hc" style="left:268px;top:582px;width:31px;height:19px"></div>
<div class="a gt" style="left:270px;top:584px">14</div>
<div class="a gc" style="left:299px;top:582px;width:45px;height:19px"></div>
<div class="a gt" style="left:301px;top:584px">1</div>
<div class="a gc" style="left:344px;top:582px;width:182px;height:19px"></div>
<div class="a gt cj" style="left:346px;top:583px">广深高速</div>
<div class="a gc" style="left:526px;top:582px;width:82px;height:19px"></div>
<div class="a gt" style="left:528px;top:584px">115496962</div>
<div class="a gc" style="left:608px;top:582px;width:82px;height:19px"></div>
<div class="a gt" style="left:610px;top:584px">126064511</div>
<div class="a gc" style="left:690px;top:582px;width:82px;height:19px"></div>
<div class="a gt" style="left:692px;top:584px">132029784</div>
<div class="a hc" style="left:268px;top:601px;width:31px;height:19px"></div>
<div class="a gt" style="left:270px;top:603px">15</div>
<div class="a gc" style="left:299px;top:601px;width:45px;height:19px"></div>
<div class="a gt" style="left:301px;top:603px">54</div>
<div class="a gc" style="left:344px;top:601px;width:182px;height:19px"></div>
<div class="a gt cj" style="left:346px;top:602px">广云高速</div>
<div class="a gc" style="left:526px;top:601px;width:82px;height:19px"></div>
<div class="a gt" style="left:528px;top:603px">2278301</div>
<div class="a gc" style="left:608px;top:601px;width:82px;height:19px"></div>
<div class="a gt" style="left:610px;top:603px">2814363</div>
<div class="a gc" style="left:690px;top:601px;width:82px;height:19px"></div>
<div class="a gt" style="left:692px;top:603px">2783554</div>
<div class="a" style="left:263px;top:619px;width:699px;height:3px;background:#f5f4ee"></div>


<!-- grid scrollbar -->
<div class="a trk" style="left:962px;top:316px;width:17px;height:303px"></div>
<div class="a sbtn" style="left:963px;top:316px;width:15px;height:16px"><svg class="a" style="left:2px;top:4px" width="10" height="7"><path d="M1 5.5L5 1.5L9 5.5" fill="none" stroke="#4d6185" stroke-width="2.2"/></svg></div>
<div class="a sthumb" style="left:963px;top:333px;width:15px;height:17px"><div class="a grip" style="left:3px;top:4px"></div></div>
<div class="a sbtn" style="left:963px;top:603px;width:15px;height:16px"><svg class="a" style="left:2px;top:5px" width="10" height="7"><path d="M1 1.5L5 5.5L9 1.5" fill="none" stroke="#4d6185" stroke-width="2.2"/></svg></div>

<!-- tabs -->
<div class="a" style="left:262px;top:622px;width:721px;height:1px;background:#716f64"></div>
<div class="a" style="left:266px;top:641px;width:54px;height:1px;background:#8d8b7e"></div>
<svg class="a" style="left:270px;top:624px" width="17" height="15" viewBox="0 0 17 15" shape-rendering="crispEdges">
<path d="M8.5 0.5H14.5V12.5H8.5Z" fill="#fff" stroke="#000"/><path d="M13 3v8" stroke="#b0b0d0"/>
<path d="M0.5 3.5H9.5V14.5H0.5Z" fill="#f8f070" stroke="#000"/>
<path d="M3 6.5h5M3 8.5h5M3 10.5h5" stroke="#000"/>
</svg>
<div class="a tab" style="left:292px;top:624px">消息</div>
<div class="a" style="left:321px;top:622px;width:67px;height:22px;background:#ece9d8;border-right:1px solid #716f64;border-bottom:1px solid #716f64;border-left:1px solid #fff;border-bottom-right-radius:2px"></div>
<svg class="a" style="left:328px;top:628px" width="16" height="13" viewBox="0 0 16 13" shape-rendering="crispEdges">
<path d="M0.5 0.5H15.5V12.5H0.5Z" fill="#fff" stroke="#000"/>
<path d="M1 1H15V3H1Z" fill="#0000c8"/><path d="M2 1.5h1M13 1.5h1" stroke="#8080ff"/>
<path d="M2 4.5h2M5 4.5h2M8 4.5h2M11 4.5h3M2 6.5h2M5 6.5h2M8 6.5h2M11 6.5h3M2 8.5h2M5 8.5h2M8 8.5h2M11 8.5h3M2 10.5h2M5 10.5h2M8 10.5h2M11 10.5h3" stroke="#000"/>
</svg>
<div class="a tab" style="left:350px;top:627px">结果1</div>

<!-- status bars -->
<div class="a stp" style="left:262px;top:646px;width:241px;height:17px"></div>
<div class="a stp" style="left:504px;top:646px;width:240px;height:17px"></div>
<div class="a stp" style="left:745px;top:646px;width:240px;height:17px"></div>
<div class="a stx" style="left:264px;top:647px">事务提交方式：自动提交</div>
<div class="a stx" style="left:506px;top:647px">不存在事务</div>
<div class="a stx" style="left:747px;top:647px"><span class="m">SQL</span>之间的分隔符：<span class="m">;</span></div>
<div class="a stp" style="left:262px;top:665px;width:161px;height:17px"></div>
<div class="a stp" style="left:424px;top:665px;width:159px;height:17px"></div>
<div class="a stp" style="left:584px;top:665px;width:133px;height:17px"></div>
<div class="a stp" style="left:718px;top:665px;width:134px;height:17px"></div>
<div class="a stp" style="left:853px;top:665px;width:132px;height:17px"></div>
<div class="a stx" style="left:262px;top:665px;width:161px;overflow:hidden;text-indent:-18px">开始执行时间：<span class="m" style="margin-left:-2px">2012-09-11 12:47</span></div>
<div class="a stx" style="left:426px;top:665px">执行总时间：<span class="m">00:00:01:078</span></div>
<div class="a stx" style="left:586px;top:665px">共返回结果行数：<span class="m">76</span></div>
<div class="a stx" style="left:720px;top:665px">数据源：<span class="m ml">unitoll2</span></div>
<div class="a stx" style="left:855px;top:665px">当前用户：<span class="m ml">magf_rj</span></div>


</body></html>
